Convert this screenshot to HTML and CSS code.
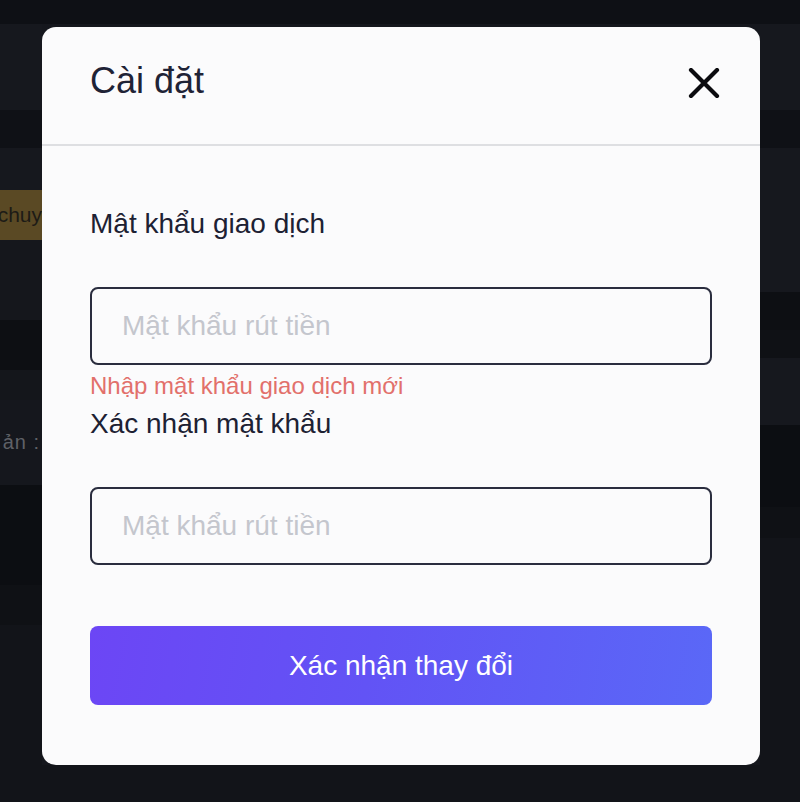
FILE: index.html
```html
<!DOCTYPE html>
<html lang="vi">
<head>
<meta charset="utf-8">
<title>Cài đặt</title>
<link rel="stylesheet" href="styles.css">
</head>
<body>
<div class="page">
  <div class="col col-left">
    <div class="band b-top"></div>
    <div class="band b-l1"></div>
    <div class="band b-l2"></div>
    <div class="band b-l3"></div>
    <div class="band b-gold"><span class="gold-text">chuy</span></div>
    <div class="band b-l5"></div>
    <div class="band b-l6"></div>
    <div class="band b-l7"></div>
    <div class="band b-l8"><span class="grey-text">ản :</span></div>
    <div class="band b-l9"></div>
    <div class="band b-l10"></div>
    <div class="band b-rest"></div>
  </div>
  <div class="col col-mid">
    <div class="band b-top"></div>
    <div class="band b-mid"></div>
    <div class="band b-rest"></div>
  </div>
  <div class="col col-right">
    <div class="band b-top"></div>
    <div class="band b-r1"></div>
    <div class="band b-r2"></div>
    <div class="band b-r3"></div>
    <div class="band b-r4"></div>
    <div class="band b-r5"></div>
    <div class="band b-r6"></div>
    <div class="band b-r7"></div>
    <div class="band b-r8"></div>
    <div class="band b-rest"></div>
  </div>
</div>

<div class="modal">
  <div class="modal-header">
    <h2 class="modal-title">Cài đặt</h2>
    <button class="close-btn" aria-label="Đóng">
      <svg width="32" height="30" viewBox="0 0 32 30">
        <path d="M3 2 L29 28 M29 2 L3 28" stroke="#0b0b0f" stroke-width="4.2" stroke-linecap="round" fill="none"/>
      </svg>
    </button>
  </div>
  <div class="modal-body">
    <label class="field-label">Mật khẩu giao dịch</label>
    <input class="field-input" type="password" placeholder="Mật khẩu rút tiền">
    <div class="field-error">Nhập mật khẩu giao dịch mới</div>
    <label class="field-label label-second">Xác nhận mật khẩu</label>
    <input class="field-input" type="password" placeholder="Mật khẩu rút tiền">
    <button class="submit-btn">Xác nhận thay đổi</button>
  </div>
</div>
</body>
</html>
```
FILE: styles.css
```css
html, body {
  margin: 0;
  padding: 0;
}
body {
  background: #0e1016;
  font-family: "Liberation Sans", Arial, sans-serif;
  width: 800px;
  height: 802px;
  overflow: hidden;
}
.page {
  display: flex;
  width: 800px;
  height: 802px;
}
.col {
  display: flex;
  flex-direction: column;
}
.col-left { width: 42px; }
.col-mid { flex: 1; }
.col-right { width: 40px; }
.band { flex: none; position: relative; overflow: hidden; }
.b-top { height: 24px; background: #0e1015; }
.b-mid { height: 741px; background: #15171d; }
.b-rest { flex: 1; background: #121419; }

.b-l1 { height: 86px; background: #16181e; }
.b-l2 { height: 38px; background: #0f1116; }
.b-l3 { height: 42px; background: #16181e; }
.b-gold { height: 50px; background: #5a4924; display: flex; align-items: center; justify-content: flex-end; }
.b-l5 { height: 80px; background: #15171c; }
.b-l6 { height: 50px; background: #0d0f13; }
.b-l7 { height: 30px; background: #14161b; }
.b-l8 { height: 85px; background: #15171d; display: flex; align-items: center; justify-content: flex-end; }
.b-l9 { height: 100px; background: #0c0e12; }
.b-l10 { height: 40px; background: #0f1115; }

.gold-text {
  font-size: 21px;
  color: #1d1b16;
  white-space: nowrap;
  margin-right: 0;
}
.grey-text {
  font-size: 20px;
  color: #5f6167;
  white-space: nowrap;
  margin-right: 2px;
  letter-spacing: 1px;
}

.b-r1 { height: 86px; background: #16181e; }
.b-r2 { height: 38px; background: #0f1116; }
.b-r3 { height: 144px; background: #16181e; }
.b-r4 { height: 38px; background: #0d0f13; }
.b-r5 { height: 28px; background: #0f1115; }
.b-r6 { height: 67px; background: #16181e; }
.b-r7 { height: 82px; background: #0c0e12; }
.b-r8 { height: 31px; background: #0f1115; }

.modal {
  position: absolute;
  left: 42px;
  top: 27px;
  width: 718px;
  height: 738px;
  background: #fbfbfc;
  border-radius: 14px;
  box-sizing: border-box;
  overflow: hidden;
}
.modal-header {
  height: 119px;
  box-sizing: border-box;
  border-bottom: 2px solid #dedfe2;
  display: flex;
  justify-content: space-between;
  align-items: flex-start;
  padding: 0 40px 0 48px;
}
.modal-title {
  margin: 34px 0 0;
  font-size: 36px;
  line-height: 40px;
  font-weight: normal;
  color: #1f2336;
}
.close-btn {
  margin-top: 41px;
  padding: 0;
  border: none;
  background: none;
  width: 32px;
  height: 30px;
  display: block;
}
.close-btn svg { display: block; }

.modal-body {
  padding: 58px 48px 0;
  display: flex;
  flex-direction: column;
}
.field-label {
  font-size: 28px;
  line-height: 40px;
  color: #1d2133;
}
.label-second { margin-top: 2px; }
.field-input {
  margin-top: 43px;
  height: 78px;
  box-sizing: border-box;
  border: 2px solid #2a2d3e;
  border-radius: 8px;
  background: #fbfbfc;
  padding: 0 30px;
  font-family: "Liberation Sans", Arial, sans-serif;
  font-size: 28px;
  color: #1d2133;
  outline: none;
}
.field-input::placeholder {
  color: #c4c6cd;
}
.field-error {
  margin-top: 5px;
  font-size: 24px;
  line-height: 32px;
  color: #e2706b;
}
.submit-btn {
  margin-top: 61px;
  height: 79px;
  border: none;
  border-radius: 8px;
  background: linear-gradient(100deg, #6c46f5 0%, #6253f5 45%, #5a68f7 100%);
  color: #ffffff;
  font-family: "Liberation Sans", Arial, sans-serif;
  font-size: 28px;
}
```
